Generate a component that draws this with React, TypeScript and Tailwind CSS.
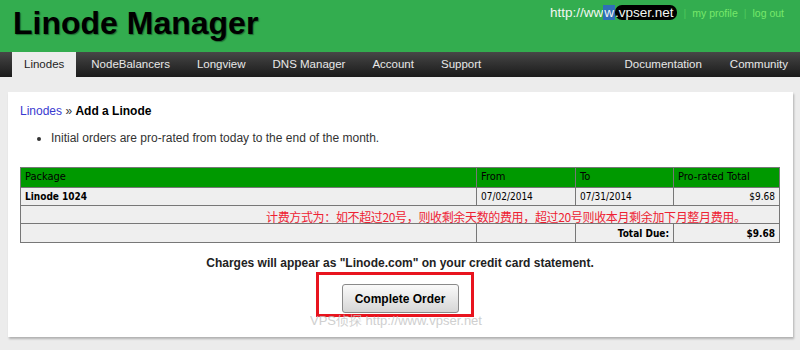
const navLeft = ["NodeBalancers", "Longview", "DNS Manager", "Account", "Support"];
const navRight = ["Documentation", "Community"];

const App = () => {
  return (
    <div className="h-[350px] w-[800px] overflow-hidden bg-[#ececec] font-['Liberation_Sans',Arial,sans-serif]">
      {/* header */}
      <div className="flex h-[52px] items-start justify-between bg-[#33ad4f]">
        <h1 className="ml-[13px] mt-[4px] text-[32px] font-bold leading-[38px] text-black [text-shadow:1px_1px_1px_#1d6b30]">
          Linode Manager
        </h1>
        <div className="mr-[16px] mt-[5px] flex items-center text-[10.5px] leading-[16px]">
          <span className="text-[13.5px] text-[#f2f6f2]">
            http://ww
            <span className="bg-[#2f6fb8] px-[1px]">w</span>
            <span className="rounded-[7px] bg-black pr-[4px]">.vpser.net</span>
          </span>
          <span className="mx-[6px] text-[#4fc95c]">|</span>
          <span className="text-[#78e86a]">my profile</span>
          <span className="mx-[6px] text-[#4fc95c]">|</span>
          <span className="text-[#78e86a]">log out</span>
        </div>
      </div>

      {/* nav */}
      <div className="flex h-[25px] justify-between bg-gradient-to-b from-[#474747] to-[#1b1b1b] text-[11.5px] leading-[25px]">
        <div className="ml-[12px] flex gap-[3px]">
          <span className="bg-[#ececec] px-3 text-[#1e1e1e]">Linodes</span>
          {navLeft.map((n) => (
            <span key={n} className="px-3 text-[#e8e8e8]">
              {n}
            </span>
          ))}
        </div>
        <div className="flex gap-[4px]">
          {navRight.map((n) => (
            <span key={n} className="px-3 text-[#e8e8e8]">
              {n}
            </span>
          ))}
        </div>
      </div>

      {/* content */}
      <div className="pl-[8px] pr-[7px] pt-[15px]">
        <div className="relative h-[245px] bg-white pl-[12px] pr-[13px] pt-[12px] shadow-[1px_2px_2px_rgba(0,0,0,0.25)]">
          <div className="text-[12px] leading-[14px]">
            <span className="text-[#3a3ad0]">Linodes</span>
            <span className="text-[#333]"> » </span>
            <span className="font-bold text-black">Add a Linode</span>
          </div>
          <ul className="mt-[13px] list-disc pl-[31px] text-[12px] leading-[14px] text-[#333]">
            <li>Initial orders are pro-rated from today to the end of the month.</li>
          </ul>

          <table className="mt-[22px] w-[760px] border-collapse font-['DejaVu_Sans_Condensed','DejaVu_Sans',sans-serif] text-[10px] text-black">
            <thead>
              <tr className="h-[20px] bg-[#009900] text-left text-[11px]">
                <th className="w-[456px] border border-[#777] px-[4px] font-normal">Package</th>
                <th className="w-[99px] border border-[#777] px-[4px] font-normal">From</th>
                <th className="w-[98px] border border-[#777] px-[4px] font-normal">To</th>
                <th className="border border-[#777] px-[4px] font-normal">Pro-rated Total</th>
              </tr>
            </thead>
            <tbody className="bg-[#efefef]">
              <tr className="h-[18px]">
                <td className="border border-[#777] px-[4px] font-bold">Linode 1024</td>
                <td className="border border-[#777] px-[4px]">07/02/2014</td>
                <td className="border border-[#777] px-[4px]">07/31/2014</td>
                <td className="border border-[#777] px-[4px] text-right">$9.68</td>
              </tr>
              <tr className="h-[18px]">
                <td className="border border-[#777] px-[4px]" colSpan={4}></td>
              </tr>
              <tr className="h-[19px]">
                <td className="border border-[#777] px-[4px]"></td>
                <td className="border border-[#777] px-[4px]"></td>
                <td className="border border-[#777] px-[4px] text-right font-bold">Total Due:</td>
                <td className="border border-[#777] px-[4px] text-right font-bold">$9.68</td>
              </tr>
            </tbody>
          </table>

          <p className="mt-[13px] text-center text-[12px] font-bold leading-[14px] text-[#222]">
            Charges will appear as "Linode.com" on your credit card statement.
          </p>
          <div className="mt-[14px] flex justify-center">
            <button className="h-[29px] w-[117px] rounded-[3px] border border-[#8a8a8a] bg-gradient-to-b from-[#fafafa] to-[#d6d6d6] text-[12px] font-bold text-black">
              Complete Order
            </button>
          </div>

          {/* annotations over the screenshot */}
          <div className="absolute left-[258px] top-[118px] whitespace-nowrap font-['Noto_Sans_CJK_SC',sans-serif] text-[12px] leading-[14px] tracking-[-0.35px] text-[#ee2233]">
            计费方式为：如不超过20号，则收剩余天数的费用，超过20号则收本月剩余加下月整月费用。
          </div>
          <div className="absolute left-[308px] top-[180px] h-[45px] w-[158px] border-[3px] border-[#e8141e]"></div>
          <div className="absolute left-[302px] top-[221px] whitespace-nowrap text-[13px] leading-[16px] text-[#c4c4c4] opacity-80">
            VPS侦探 http://www.vpser.net
          </div>
        </div>
      </div>
    </div>
  );
};

export default App;
